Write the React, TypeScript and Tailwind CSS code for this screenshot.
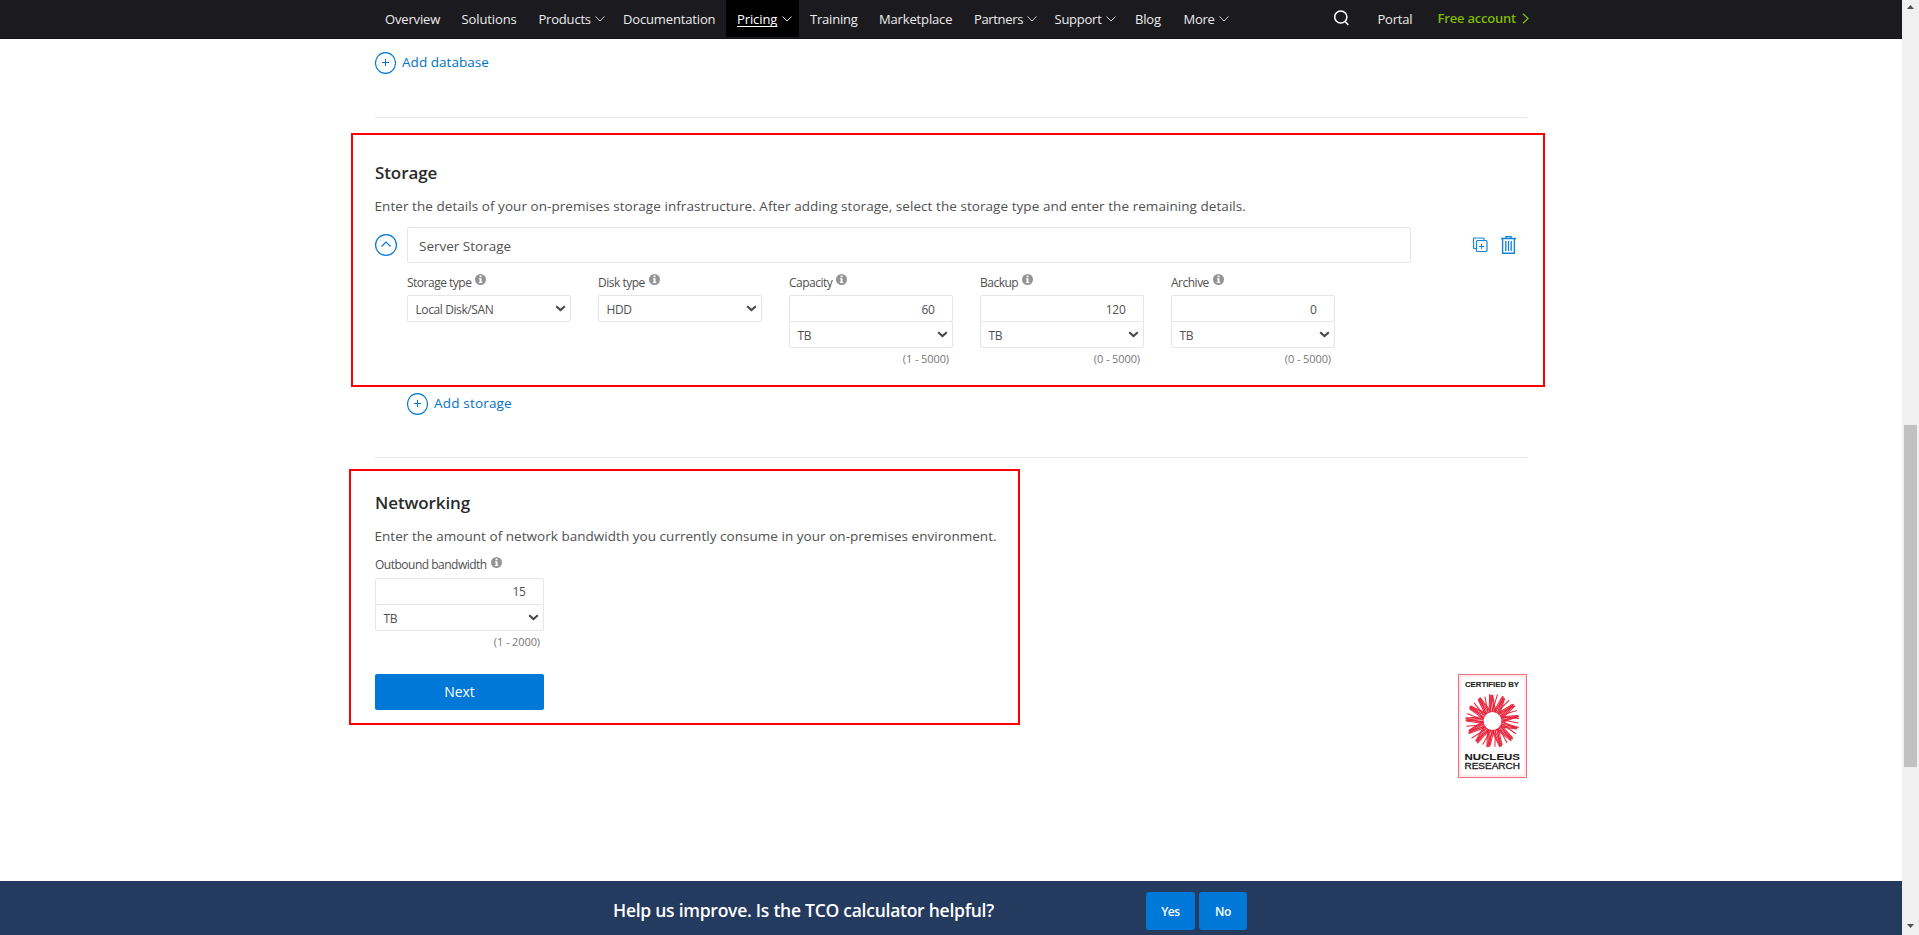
import type { ReactNode } from "react";

type NavItem = { label: string; width: string; menu?: boolean; tracking: string };

const NAV: NavItem[] = [
  { label: "Overview", width: "w-[76.5px]", tracking: "tracking-[-0.15px]" },
  { label: "Solutions", width: "w-[77px]", tracking: "tracking-[-0.1px]" },
  { label: "Products", width: "w-[84.5px]", menu: true, tracking: "tracking-[-0.2px]" },
  { label: "Documentation", width: "w-[103px]", tracking: "tracking-[-0.15px]" },
];

const NAV_AFTER: NavItem[] = [
  { label: "Training", width: "w-[69px]", tracking: "tracking-[-0.2px]" },
  { label: "Marketplace", width: "w-[95px]", tracking: "tracking-[-0.15px]" },
  { label: "Partners", width: "w-[80.5px]", menu: true, tracking: "tracking-[-0.35px]" },
  { label: "Support", width: "w-[80.5px]", menu: true, tracking: "tracking-[-0.25px]" },
  { label: "Blog", width: "w-[48.5px]", tracking: "tracking-[-0.2px]" },
  { label: "More", width: "w-[150.5px]", menu: true, tracking: "tracking-[-0.3px]" },
];

function MenuChevron() {
  return (
    <svg className="mt-[16px] ml-[4.5px] h-[6px] w-[10px] shrink-0 opacity-90" viewBox="0 0 10 6" fill="none" stroke="currentColor" strokeWidth="1">
      <path d="M0.5 0.5 5 5 9.5 0.5" />
    </svg>
  );
}

function NavLink({ item }: { item: NavItem }) {
  return (
    <a className={`flex shrink-0 items-start ${item.width}`}>
      <span className={`leading-[38px] ${item.tracking}`}>{item.label}</span>
      {item.menu && <MenuChevron />}
    </a>
  );
}

function Header() {
  return (
    <header className="flex h-[39px] shrink-0 border-b border-[#120f1a] bg-[#1b1a1f] pl-[385px] text-[13px] whitespace-nowrap text-[#ececec]">
      {NAV.map((i) => (
        <NavLink key={i.label} item={i} />
      ))}
      <a className="flex h-[37px] w-[73px] shrink-0 items-start rounded-b-[2px] bg-black pl-[11px] text-white">
        <span className="leading-[38px] tracking-[-0.1px] underline underline-offset-2 [text-decoration-skip-ink:none]">Pricing</span>
        <MenuChevron />
      </a>
      <div className="w-[11px] shrink-0" />
      {NAV_AFTER.map((i) => (
        <NavLink key={i.label} item={i} />
      ))}
      <svg className="mt-[10px] h-[16px] w-[15px] shrink-0" viewBox="0 0 15 16" fill="none" stroke="#fff" strokeWidth="1.5">
        <circle cx="6.8" cy="7" r="6.1" />
        <path d="M11 11.2 14.3 15" />
      </svg>
      <a className="ml-[28.5px] w-[60px] shrink-0 leading-[38px] tracking-[-0.2px]">Portal</a>
      <a className="flex items-start font-semibold text-[#7fba00]">
        <span className="w-[84.5px] leading-[36px] tracking-[-0.2px]">Free account</span>
        <svg className="mt-[13px] h-[11px] w-[7px]" viewBox="0 0 7 11" fill="none" stroke="currentColor" strokeWidth="1.3">
          <path d="M1 0.7 6 5.5 1 10.3" />
        </svg>
      </a>
    </header>
  );
}

function AddButton({ children, tracking }: { children: ReactNode; tracking: string }) {
  return (
    <button className={`flex h-[22px] items-start text-[13.5px] leading-5 text-[#0072c6] ${tracking}`}>
      <svg className="mr-[6px] h-[22px] w-[21px]" viewBox="0 0 21 22" fill="none" stroke="#0078d7">
        <ellipse cx="10.5" cy="11" rx="10" ry="10.4" strokeWidth="1.1" />
        <path d="M7 10.5h7M10.5 7v7" />
      </svg>
      {children}
    </button>
  );
}

function InfoIcon() {
  return (
    <svg className="h-[11px] w-[11px] shrink-0" viewBox="0 0 11 11">
      <circle cx="5.5" cy="5.5" r="5.5" fill="#949494" />
      <path d="M4.6 1.6h1.9v1.6H4.6zM3.9 4.2h2.6v3.7h.8v1H3.8v-1h.8V5.2h-.7z" fill="#fff" />
    </svg>
  );
}

function FieldLabel({ children, raised }: { children: ReactNode; raised?: boolean }) {
  return (
    <div className="flex h-4 items-start gap-[4px] text-[12px] leading-4 tracking-[-0.5px] text-[#505050]">
      <span>{children}</span>
      <div className={raised ? "-mt-px" : ""}>
        <InfoIcon />
      </div>
    </div>
  );
}

function SelectBox({ children }: { children: ReactNode }) {
  return (
    <div className="flex h-[27px] items-start justify-between rounded-[2px] border border-[#e6e6e6] bg-white pr-[4px] pl-[7.5px] text-[12px] leading-[27px] tracking-[-0.4px] text-[#505050]">
      {children}
      <svg className="mt-[9px] h-[7px] w-[11px]" viewBox="0 0 11 7" fill="none" stroke="#484848" strokeWidth="2.1">
        <path d="M1.2 1.2 5.5 5 9.8 1.2" />
      </svg>
    </div>
  );
}

function NumberBox({ children, leading }: { children: ReactNode; leading: string }) {
  return (
    <div className={`h-[27px] rounded-[2px] border border-[#e6e6e6] bg-white pr-[17.5px] text-right text-[12px] tracking-[-0.3px] text-[#505050] ${leading}`}>
      {children}
    </div>
  );
}

function Amount({ value, range, leading = "leading-[27px]" }: { value: string; range: string; leading?: string }) {
  return (
    <>
      <NumberBox leading={leading}>{value}</NumberBox>
      <div className="-mt-px">
        <SelectBox>TB</SelectBox>
      </div>
      <div className="mt-[3px] pr-[4px] text-right text-[11px] leading-4 tracking-[-0.1px] text-[#777]">{range}</div>
    </>
  );
}

function Column({ label, children }: { label: string; children: ReactNode }) {
  return (
    <div className="w-[164px]">
      <FieldLabel raised>{label}</FieldLabel>
      <div className="mt-1">{children}</div>
    </div>
  );
}

function StorageRow() {
  return (
    <div className="mt-[11px] flex h-9 items-start">
      <svg className="mt-[7px] h-[22px] w-[22px]" viewBox="0 0 22 22" fill="none" stroke="#0078d7">
        <circle cx="11" cy="11" r="10.4" strokeWidth="1.2" />
        <path d="M6.5 12.5 11 8l4.5 4.5" strokeWidth="1.1" />
      </svg>
      <div className="ml-[10px] h-9 w-[1004px] rounded-[2px] border border-[#e6e6e6] pl-[11px] text-[13.5px] leading-[36px] text-[#505050]">
        Server Storage
      </div>
      <svg className="mt-[10px] ml-[62px] h-[16px] w-[15px]" viewBox="0 0 15 16" fill="none" stroke="#1683da">
        <path d="M3 11.5H1.5a1 1 0 0 1-1-1V2a1 1 0 0 1 1-1H10a1 1 0 0 1 1 1v1" strokeWidth="1.2" />
        <rect x="3.5" y="3.5" width="10.5" height="11" rx="1" strokeWidth="1.2" />
        <path d="M6 9.5h5M8.5 7v5" />
      </svg>
      <svg className="mt-[9px] ml-[13px] h-[18px] w-[15px]" viewBox="0 0 15 18" fill="none" stroke="#1683da">
        <path d="M0 2.5h15" strokeWidth="1.5" />
        <path d="M5 2.5v-2h5v2M1.6 2.5v14.7h11.8V2.5" strokeWidth="1.4" />
        <path d="M4.8 5v10M7.5 5v10M10.2 5v10" strokeWidth="1.3" />
      </svg>
    </div>
  );
}

const RAYS = Array.from({ length: 90 }, (_, i) => {
  const a = (i / 90) * Math.PI * 2;
  const b = a + [0.32, -0.28, 0.1, -0.38, 0.22, -0.1, 0.28][i % 7];
  const r = 25.5 + ((i * 7) % 5) * 0.4;
  return {
    x1: 34.5 + Math.cos(a) * 9,
    y1: 47 + Math.sin(a) * 9,
    x2: 34.5 + Math.cos(b) * r,
    y2: 47 + Math.sin(b) * r,
  };
});

function NucleusBadge() {
  return (
    <svg className="h-[104px] w-[69px]" viewBox="0 0 69 104">
      <rect x="0.5" y="0.5" width="68" height="103" fill="#fff" stroke="#ee6f7e" />
      <rect x="2" y="2" width="65" height="100" fill="none" stroke="#fbc9ce" strokeWidth="0.8" />
      <g stroke="#e8253c" strokeWidth="1.05">
        {RAYS.map((r, i) => (
          <line key={i} {...r} />
        ))}
      </g>
      <g fill="#1c1c1c" stroke="#1c1c1c" fontFamily="'Liberation Sans', Arial, sans-serif">
        <text x="7" y="13" fontSize="7.4" fontWeight="700" strokeWidth="0.1" textLength="54" lengthAdjust="spacingAndGlyphs">CERTIFIED BY</text>
        <text x="6.5" y="86" fontSize="9.2" fontWeight="700" strokeWidth="0.1" textLength="55.5" lengthAdjust="spacingAndGlyphs">NUCLEUS</text>
        <text x="6.5" y="95" fontSize="8.4" strokeWidth="0.3" textLength="55.5" lengthAdjust="spacingAndGlyphs">RESEARCH</text>
      </g>
    </svg>
  );
}

function Main() {
  return (
    <main className="relative flex-1 px-[375px] text-[13.5px] leading-5 text-[#505050]">
      <div className="pt-[13px]">
        <AddButton tracking="tracking-[0.04px]">Add database</AddButton>
      </div>
      <div className="mt-[43px] h-px bg-[#e8e8e8]" />

      <section>
        <h2 className="mt-[43px] text-[17px] leading-6 font-semibold tracking-[-0.1px] text-[#2b2b2b]">Storage</h2>
        <p className="mt-[11px] -ml-[0.5px] tracking-[0.055px] whitespace-nowrap">
          Enter the details of your on-premises storage infrastructure. After adding storage, select the storage type and enter the remaining details.
        </p>
        <StorageRow />
        <div className="mt-[12px] ml-8 flex h-[92px] gap-[27px]">
          <Column label="Storage type">
            <SelectBox>Local Disk/SAN</SelectBox>
          </Column>
          <Column label="Disk type">
            <SelectBox>HDD</SelectBox>
          </Column>
          <Column label="Capacity">
            <Amount value="60" range="(1 - 5000)" />
          </Column>
          <Column label="Backup">
            <Amount value="120" range="(0 - 5000)" />
          </Column>
          <Column label="Archive">
            <Amount value="0" range="(0 - 5000)" />
          </Column>
        </div>
        <div className="mt-[26px] ml-8">
          <AddButton tracking="tracking-[0.18px]">Add storage</AddButton>
        </div>
      </section>
      <div className="mt-[42px] h-px bg-[#e8e8e8]" />

      <section>
        <h2 className="mt-[33px] text-[17px] leading-6 font-semibold tracking-[-0.1px] text-[#2b2b2b]">Networking</h2>
        <p className="mt-[11px] -ml-[0.5px] tracking-[0.035px] whitespace-nowrap">
          Enter the amount of network bandwidth you currently consume in your on-premises environment.
        </p>
        <div className="mt-[11px] w-[169px]">
          <FieldLabel>Outbound bandwidth</FieldLabel>
          <div className="mt-[5px]">
            <Amount value="15" range="(1 - 2000)" leading="leading-[25px]" />
          </div>
        </div>
        <div className="mt-6 flex items-start justify-between">
          <button className="h-9 w-[169px] rounded-[2px] bg-[#0078d7] text-[14px] leading-[34px] font-medium text-white">Next</button>
          <NucleusBadge />
        </div>
      </section>

      <div className="pointer-events-none absolute top-[94px] left-[351px] h-[254px] w-[1194px] border-2 border-[#ff0000]" />
      <div className="pointer-events-none absolute top-[430px] left-[349px] h-[256px] w-[671px] border-2 border-[#ff0000]" />
    </main>
  );
}

function FeedbackBar() {
  return (
    <footer className="flex h-[54px] shrink-0 items-start bg-[#243a5e] pt-[11px] pl-[613px] font-semibold text-white">
      <div className="w-[533px] text-[17.5px] leading-[37px] tracking-[-0.26px] whitespace-nowrap">
        Help us improve. Is the TCO calculator helpful?
      </div>
      <button className="mr-1 h-[38px] w-[49px] rounded-[3px] bg-[#0078d7] pt-[2px] text-[12px] tracking-[-0.4px]">Yes</button>
      <button className="h-[38px] w-[48px] rounded-[3px] bg-[#0078d7] pt-[2px] text-[12px] tracking-[-0.4px]">No</button>
    </footer>
  );
}

function Scrollbar() {
  return (
    <div className="flex h-[935px] w-[17px] shrink-0 flex-col items-center bg-[#f0f0f0]">
      <svg className="mt-[5px] h-[4px] w-[7px]" viewBox="0 0 7 4">
        <path d="M0 4 3.5 0 7 4z" fill="#505050" />
      </svg>
      <div className="mt-[416px] h-[342px] w-[13px] bg-[#c1c1c1]" />
      <svg className="mt-auto mb-[7px] h-[4px] w-[7px]" viewBox="0 0 7 4">
        <path d="M0 0 3.5 4 7 0z" fill="#505050" />
      </svg>
    </div>
  );
}

export default function App() {
  return (
    <div className="flex h-[935px] w-[1919px] overflow-hidden bg-white font-['Open_Sans','Noto_Sans',sans-serif]">
      <div className="flex w-[1902px] flex-col">
        <Header />
        <Main />
        <FeedbackBar />
      </div>
      <Scrollbar />
    </div>
  );
}
